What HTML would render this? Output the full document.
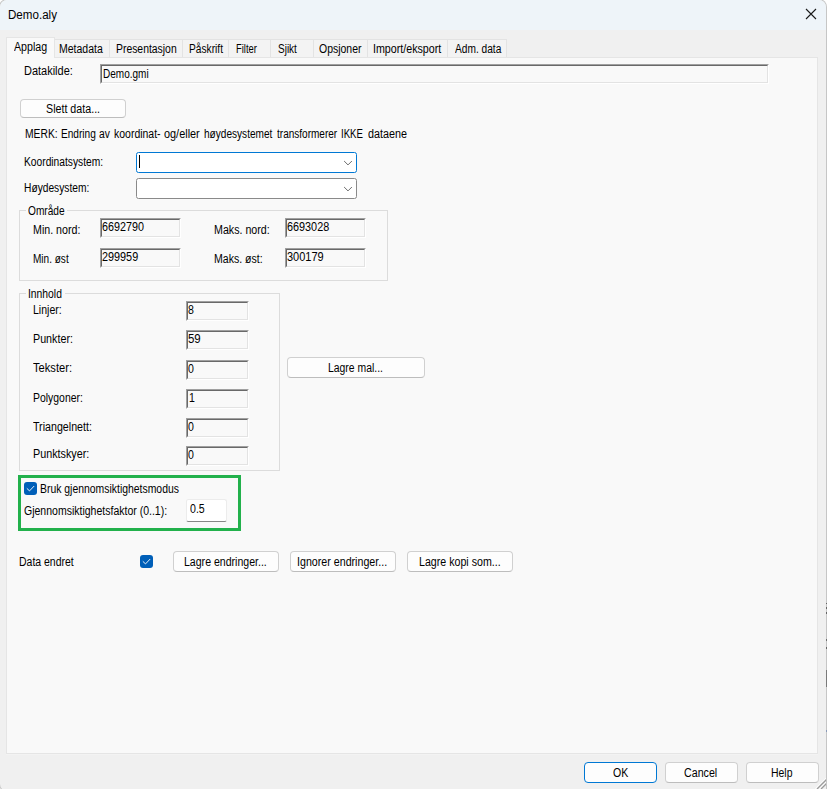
<!DOCTYPE html>
<html><head><meta charset="utf-8"><title>Demo.aly</title>
<style>
html,body{margin:0;padding:0}
body{width:827px;height:789px;position:relative;overflow:hidden;background:#fff;font-family:"Liberation Sans",sans-serif;font-size:12px;color:#000}
#win{position:absolute;left:0;top:0;width:826px;height:791px;background:#f0f0f0;border-radius:7px 7px 0 7px;overflow:hidden;box-shadow:0 0 0 1px #c6c6c6}
.mk{position:absolute;left:826px;width:1px}
#title{position:absolute;left:0;top:0;width:826px;height:30px;background:#eef4f9}
.t{position:absolute;white-space:nowrap;line-height:12px;height:12px;transform-origin:0 0}
.t.title{font-size:12px;line-height:14px;height:14px}
#tabstrip{position:absolute;left:54px;top:39px;width:453px;height:18px;background:#f3f3f3;border-top:1px solid #e3e3e3;box-sizing:border-box}
.tabsep{position:absolute;top:40px;width:1px;height:17px;background:#e3e3e3}
#panel{position:absolute;left:6px;top:57px;width:812px;height:697px;box-sizing:border-box;background:#f9f9f9;border:1px solid #e5e5e5;box-shadow:0 1px 0 #f3f3f3}
#atab{position:absolute;left:6px;top:37px;width:49px;height:21px;box-sizing:border-box;background:#f9f9f9;border:1px solid #e5e5e5;border-bottom:none}
.sunk{position:absolute;box-sizing:border-box;border-top:1px solid #a0a0a0;border-left:1px solid #a0a0a0;border-right:1px solid #fff;border-bottom:1px solid #fff;background:#f9f9f9}
.sunk:before{content:"";position:absolute;left:0;top:0;right:0;bottom:0;border-top:1px solid #696969;border-left:1px solid #696969;border-right:1px solid #e3e3e3;border-bottom:1px solid #e3e3e3}
.btn{position:absolute;box-sizing:border-box;background:#fdfdfd;border:1px solid #d0d0d0;border-bottom-color:#bdbdbd;border-radius:4px}
.btn.def{border-color:#0078d4}
.combo{position:absolute;box-sizing:border-box;background:#fff;border:1px solid #8a8a8a;border-radius:2.5px}
.combo.focus{border-color:#0078d4}
.grp{position:absolute;box-sizing:border-box;border:1px solid #dcdcdc}
.grpl{position:absolute;background:#f9f9f9}
#green{position:absolute;left:18px;top:475px;width:223px;height:56px;box-sizing:border-box;border:3px solid #22b14c}
.chk{position:absolute}
.edit{position:absolute;box-sizing:border-box;background:#fff;border:1px solid #ececec;border-bottom:1px solid #868686;border-radius:2.5px}
</style></head>
<body>
<div id="win">
<div id="title"></div>
<span class="t title" style="left:8.4px;top:8px;transform:scaleX(0.966);">Demo.aly</span>
<svg style="position:absolute;left:805px;top:8px" width="12" height="12" viewBox="0 0 12 12"><path d="M1 1 L11 11 M11 1 L1 11" stroke="#1a1a1a" stroke-width="1.1" fill="none"/></svg>
<div id="tabstrip"></div>
<div class="tabsep" style="left:109px"></div>
<div class="tabsep" style="left:182px"></div>
<div class="tabsep" style="left:228px"></div>
<div class="tabsep" style="left:270px"></div>
<div class="tabsep" style="left:313px"></div>
<div class="tabsep" style="left:367px"></div>
<div class="tabsep" style="left:447px"></div>
<div class="tabsep" style="left:506px"></div>
<div id="panel"></div>
<div id="atab"></div>
<span class="t" style="left:14.3px;top:41px;transform:scaleX(0.888);">Applag</span>
<span class="t" style="left:58.9px;top:43px;transform:scaleX(0.876);">Metadata</span>
<span class="t" style="left:115.7px;top:43px;transform:scaleX(0.866);">Presentasjon</span>
<span class="t" style="left:189.1px;top:43px;transform:scaleX(0.849);">Påskrift</span>
<span class="t" style="left:236.0px;top:43px;transform:scaleX(0.78);">Filter</span>
<span class="t" style="left:278.3px;top:43px;transform:scaleX(0.832);">Sjikt</span>
<span class="t" style="left:319.4px;top:43px;transform:scaleX(0.873);">Opsjoner</span>
<span class="t" style="left:373.4px;top:43px;transform:scaleX(0.89);">Import/eksport</span>
<span class="t" style="left:455.3px;top:43px;transform:scaleX(0.847);">Adm. data</span>
<span class="t" style="left:23.8px;top:65px;transform:scaleX(0.915);">Datakilde:</span>
<div class="sunk" style="left:100px;top:64px;width:669px;height:20px"></div>
<span class="t" style="left:102.7px;top:68px;transform:scaleX(0.834);">Demo.gmi</span>
<div class="btn" style="left:20px;top:99px;width:106px;height:19px"></div>
<span class="t" style="left:46.1px;top:103px;transform:scaleX(0.891);">Slett data...</span>
<span class="t" style="left:24.7px;top:128px;transform:scaleX(0.858);">MERK:</span>
<span class="t" style="left:60.6px;top:128px;transform:scaleX(0.843);">Endring</span>
<span class="t" style="left:99.0px;top:128px;transform:scaleX(0.858);">av</span>
<span class="t" style="left:113.9px;top:128px;transform:scaleX(0.873);">koordinat-</span>
<span class="t" style="left:164.2px;top:128px;transform:scaleX(0.908);">og/eller</span>
<span class="t" style="left:203.9px;top:128px;transform:scaleX(0.84);">høydesystemet</span>
<span class="t" style="left:276.7px;top:128px;transform:scaleX(0.836);">transformerer</span>
<span class="t" style="left:340.5px;top:128px;transform:scaleX(0.804);">IKKE</span>
<span class="t" style="left:367.5px;top:128px;transform:scaleX(0.899);">dataene</span>
<span class="t" style="left:24.4px;top:156px;transform:scaleX(0.854);">Koordinatsystem:</span>
<span class="t" style="left:24.4px;top:182px;transform:scaleX(0.852);">Høydesystem:</span>
<div class="combo focus" style="left:136px;top:152px;width:221px;height:21px"><svg width="10" height="6" viewBox="0 0 10 6" style="position:absolute;left:206px;top:7px"><path d="M1.1 1 L5 4.9 L8.9 1" fill="none" stroke="#5c5c5c" stroke-width="0.9"/></svg></div>
<div class="combo" style="left:136px;top:178px;width:221px;height:21px"><svg width="10" height="6" viewBox="0 0 10 6" style="position:absolute;left:206px;top:7px"><path d="M1.1 1 L5 4.9 L8.9 1" fill="none" stroke="#5c5c5c" stroke-width="0.9"/></svg></div>
<div style="position:absolute;left:139px;top:155px;width:1px;height:13px;background:#000"></div>
<div class="grp" style="left:19px;top:210px;width:369px;height:71px"></div>
<div class="grpl" style="left:26px;top:204px;width:41px;height:12px"></div>
<span class="t" style="left:28.0px;top:205px;transform:scaleX(0.845);">Område</span>
<span class="t" style="left:32.9px;top:224px;transform:scaleX(0.888);">Min. nord:</span>
<div class="sunk" style="left:100px;top:218px;width:81px;height:20px"></div>
<span class="t" style="left:101.8px;top:221px;transform:scaleX(0.896);">6692790</span>
<span class="t" style="left:213.7px;top:224px;transform:scaleX(0.889);">Maks. nord:</span>
<div class="sunk" style="left:285px;top:218px;width:81px;height:20px"></div>
<span class="t" style="left:286.8px;top:221px;transform:scaleX(0.903);">6693028</span>
<span class="t" style="left:33.0px;top:253px;transform:scaleX(0.836);">Min. øst</span>
<div class="sunk" style="left:100px;top:248px;width:81px;height:20px"></div>
<span class="t" style="left:101.7px;top:251px;transform:scaleX(0.903);">299959</span>
<span class="t" style="left:213.7px;top:253px;transform:scaleX(0.879);">Maks. øst:</span>
<div class="sunk" style="left:285px;top:248px;width:81px;height:20px"></div>
<span class="t" style="left:286.8px;top:251px;transform:scaleX(0.915);">300179</span>
<div class="grp" style="left:19px;top:293px;width:261px;height:178px"></div>
<div class="grpl" style="left:26px;top:287px;width:39px;height:12px"></div>
<span class="t" style="left:28.0px;top:288px;transform:scaleX(0.861);">Innhold</span>
<span class="t" style="left:32.6px;top:304px;transform:scaleX(0.878);">Linjer:</span>
<div class="sunk" style="left:186px;top:301px;width:63px;height:20px"></div>
<span class="t" style="left:187.9px;top:304px;transform:scaleX(0.88);">8</span>
<span class="t" style="left:32.6px;top:333px;transform:scaleX(0.894);">Punkter:</span>
<div class="sunk" style="left:186px;top:330px;width:63px;height:20px"></div>
<span class="t" style="left:187.8px;top:333px;transform:scaleX(0.955);">59</span>
<span class="t" style="left:33.3px;top:362px;transform:scaleX(0.928);">Tekster:</span>
<div class="sunk" style="left:186px;top:360px;width:63px;height:20px"></div>
<span class="t" style="left:187.9px;top:363px;transform:scaleX(0.88);">0</span>
<span class="t" style="left:32.6px;top:392px;transform:scaleX(0.869);">Polygoner:</span>
<div class="sunk" style="left:186px;top:389px;width:63px;height:20px"></div>
<span class="t" style="left:188.5px;top:392px;transform:scaleX(0.88);">1</span>
<span class="t" style="left:33.3px;top:421px;transform:scaleX(0.889);">Triangelnett:</span>
<div class="sunk" style="left:186px;top:418px;width:63px;height:20px"></div>
<span class="t" style="left:187.9px;top:421px;transform:scaleX(0.88);">0</span>
<span class="t" style="left:32.6px;top:448px;transform:scaleX(0.899);">Punktskyer:</span>
<div class="sunk" style="left:186px;top:446px;width:63px;height:20px"></div>
<span class="t" style="left:187.9px;top:449px;transform:scaleX(0.88);">0</span>
<div class="btn" style="left:287px;top:357px;width:138px;height:21px"></div>
<span class="t" style="left:327.8px;top:362px;transform:scaleX(0.867);">Lagre mal...</span>
<div id="green"></div>
<svg class="chk" style="left:24px;top:482px" width="13" height="13" viewBox="0 0 13 13"><rect x="0" y="0" width="13" height="13" rx="3" fill="#005fb8"/><path d="M3.1 6.6 L5.5 8.9 L9.9 4.3" fill="none" stroke="#f2f7fc" stroke-width="0.95" stroke-linecap="round" stroke-linejoin="round"/></svg>
<span class="t" style="left:40.1px;top:483px;transform:scaleX(0.868);">Bruk gjennomsiktighetsmodus</span>
<span class="t" style="left:23.9px;top:505px;transform:scaleX(0.876);">Gjennomsiktighetsfaktor (0..1):</span>
<div class="edit" style="left:186px;top:499px;width:41px;height:23px"></div>
<span class="t" style="left:189.6px;top:503px;transform:scaleX(0.883);">0.5</span>
<span class="t" style="left:18.5px;top:556px;transform:scaleX(0.873);">Data endret</span>
<svg class="chk" style="left:140px;top:555px" width="13" height="13" viewBox="0 0 13 13"><rect x="0" y="0" width="13" height="13" rx="3" fill="#005fb8"/><path d="M3.1 6.6 L5.5 8.9 L9.9 4.3" fill="none" stroke="#f2f7fc" stroke-width="0.95" stroke-linecap="round" stroke-linejoin="round"/></svg>
<div class="btn" style="left:173px;top:551px;width:106px;height:21px"></div>
<span class="t" style="left:183.6px;top:556px;transform:scaleX(0.88);">Lagre endringer...</span>
<div class="btn" style="left:290px;top:551px;width:106px;height:21px"></div>
<span class="t" style="left:297.4px;top:556px;transform:scaleX(0.889);">Ignorer endringer...</span>
<div class="btn" style="left:407px;top:551px;width:106px;height:21px"></div>
<span class="t" style="left:418.7px;top:556px;transform:scaleX(0.887);">Lagre kopi som...</span>
<div class="btn def" style="left:584px;top:762px;width:73px;height:21px"></div>
<span class="t" style="left:612.8px;top:767px;transform:scaleX(0.879);">OK</span>
<div class="btn" style="left:665px;top:762px;width:73px;height:21px"></div>
<span class="t" style="left:684.3px;top:767px;transform:scaleX(0.889);">Cancel</span>
<div class="btn" style="left:746px;top:762px;width:73px;height:21px"></div>
<span class="t" style="left:770.8px;top:767px;transform:scaleX(0.869);">Help</span>
<svg style="position:absolute;left:813px;top:775px" width="14" height="14" viewBox="0 0 14 14"><path d="M2.6 14 L14 2.6 M6.6 14 L14 6.6" stroke="#fff" stroke-width="1.3" fill="none"/><path d="M4 14 L14 4 M8 14 L14 8" stroke="#9c9c9c" stroke-width="1.4" fill="none"/></svg>
</div>
<div class="mk" style="top:603px;height:1px;background:#666"></div><div class="mk" style="top:607px;height:2px;background:#666"></div><div class="mk" style="top:612px;height:2px;background:#666"></div><div class="mk" style="top:639px;height:2px;background:#707070"></div><div class="mk" style="top:647px;height:2px;background:#666"></div><div class="mk" style="top:670px;height:17px;background:#7a7a7a"></div><div class="mk" style="top:730px;height:2px;background:#8a9ab8"></div>
</body></html>
